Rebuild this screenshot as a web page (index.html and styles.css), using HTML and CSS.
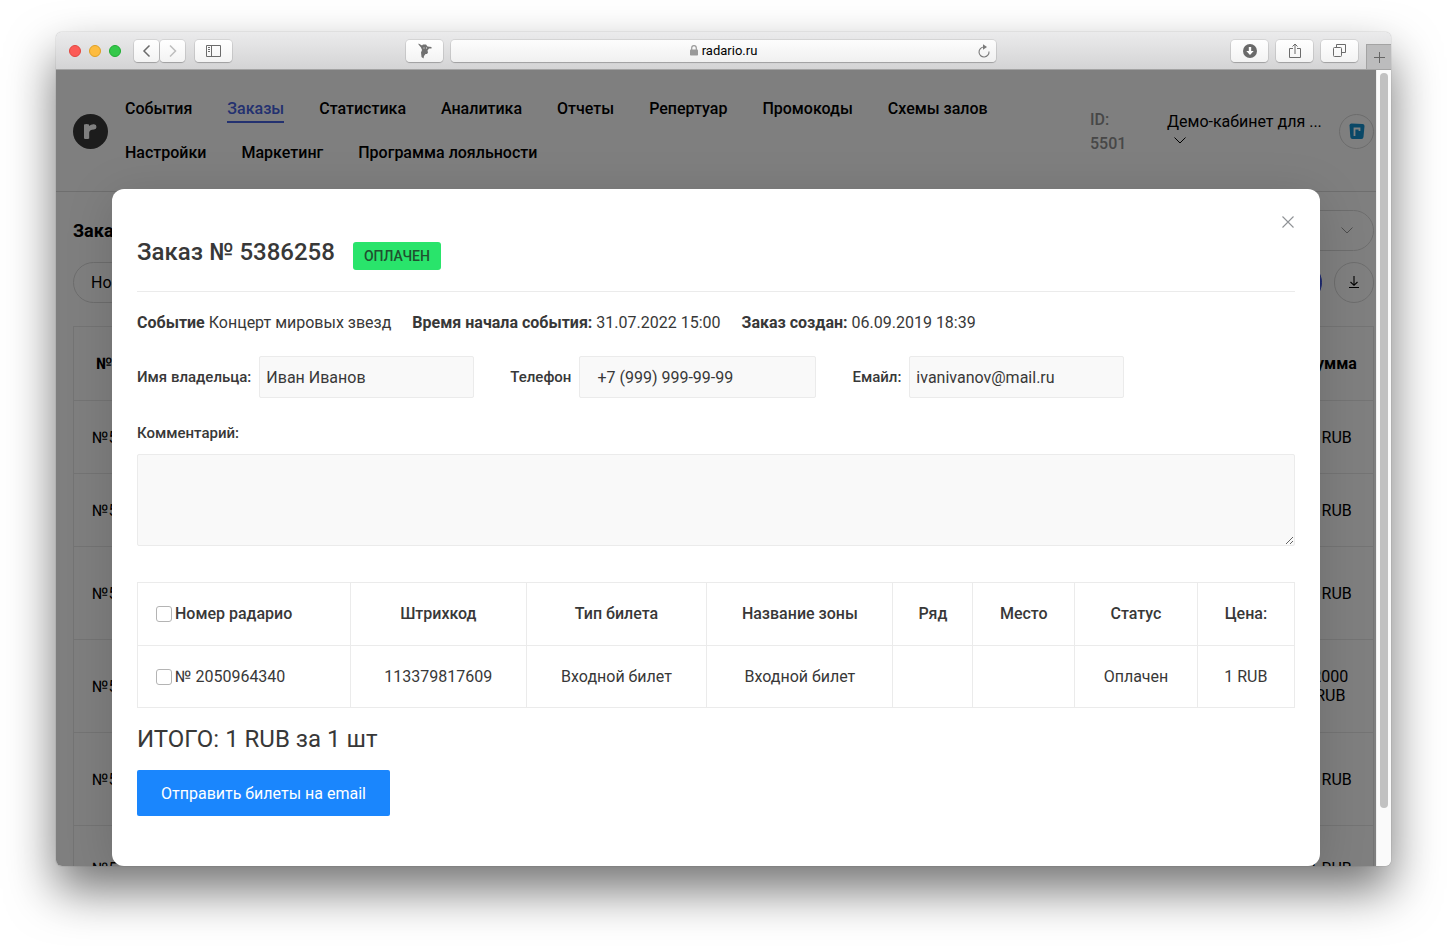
FILE: index.html
```html
<!DOCTYPE html>
<html lang="ru">
<head>
<meta charset="utf-8">
<title>radario.ru</title>
<link rel="stylesheet" href="styles.css">
</head>
<body>
<div class="window">
  <div class="toolbar">
    <div class="toolbar-left">
      <span class="light red"></span><span class="light yellow"></span><span class="light green"></span>
      <div class="history">
        <button class="tool narrow" type="button" aria-label="Назад"><svg width="10" height="14" viewBox="0 0 10 14"><path d="M7.500 1.500 2 7l5.500 5.500" fill="none" stroke="#6b6b6b" stroke-width="1.500"/></svg></button>
        <button class="tool narrow" type="button" aria-label="Вперёд"><svg width="10" height="14" viewBox="0 0 10 14"><path d="M2 1.500 7.500 7 2 12.500" fill="none" stroke="#bdbdbd" stroke-width="1.500"/></svg></button>
      </div>
      <button class="tool" type="button" aria-label="Боковая панель"><svg width="15" height="12" viewBox="0 0 15 12"><path d="M.5.5h14v11H.5zM5.500.5v11" fill="none" stroke="#6b6b6b"/><path d="M2 2.500h2M2 4.500h2M2 6.500h2" stroke="#6b6b6b"/></svg></button>
    </div>
    <div class="toolbar-center">
      <button class="tool" type="button" aria-label="Расширение"><svg width="14" height="16" viewBox="0 0 14 16"><path d="M.5.5 4 2.500 5 1.500h3l1.500 2L13.500 4v1.500H11L9.500 7.500l.5 2-1 1.500H7.500L6 13l-.5 2.500L3.500 14 3 9.500 4 7 3 4.500.5 1.500z" fill="#707070"/><path d="M5.500 5h1M8 5h1" stroke="#eee"/></svg></button>
      <div class="address">
        <span class="host"><svg width="8" height="11" viewBox="0 0 8 11"><path d="M1.700 5V3a2.300 2.300 0 0 1 4.600 0v2" fill="none" stroke="#999" stroke-width="1.200"/><rect y="4.500" width="8" height="6" rx=".8" fill="#999"/></svg>radario.ru</span>
        <button class="reload" type="button" aria-label="Обновить"><svg width="12" height="14" viewBox="0 0 12 14"><path d="M6 3a5 5 0 1 0 5 4.500" fill="none" stroke="#7a7a7a" stroke-width="1.100"/><path d="M5 .3 9 3 5 5.700z" fill="#7a7a7a"/></svg></button>
      </div>
    </div>
    <div class="toolbar-right">
      <button class="tool" type="button" aria-label="Загрузки"><svg width="14" height="14" viewBox="0 0 14 14"><circle cx="7" cy="7" r="7" fill="#6a6a6a"/><path d="M5.800 3h2.400v4h2.500L7 11 3.300 7h2.500z" fill="#fff"/></svg></button>
      <button class="tool" type="button" aria-label="Поделиться"><svg width="12" height="16" viewBox="0 0 12 16"><path d="M4 5.500H.5v9h11v-9H8M6 11V1M3.500 3.500 6 1l2.500 2.500" fill="none" stroke="#6b6b6b"/></svg></button>
      <button class="tool" type="button" aria-label="Вкладки"><svg width="13" height="13" viewBox="0 0 13 13"><path d="M.5 4.500q0-1 1-1h6q1 0 1 1v7q0 1-1 1h-6q-1 0-1-1zM3.500 3.500v-3h9v8h-4" fill="none" stroke="#6b6b6b"/></svg></button>
      <button class="new-tab" type="button" aria-label="Новая вкладка"><svg width="11" height="11" viewBox="0 0 11 11"><path d="M5.500 0v11M0 5.500h11" stroke="#666"/></svg></button>
    </div>
  </div>
  <div class="frame">
    <div class="viewport">
      <header class="site-header">
        <svg class="logo" width="35" height="35" viewBox="0 0 35 35"><circle cx="17.500" cy="17.500" r="17.500" fill="#383838"/><path d="M11 10.500q2.500-1 5 0v1.500q2-2 5-1.800 2.500.3 2.500 2.800 0 2.300-2.500 2.500-4.500 0-4.800 3v6q-2.500 1-5.200 0z" fill="#fff"/></svg>
        <nav class="menu">
          <a href="#">События</a><a href="#" class="active">Заказы</a><a href="#">Статистика</a><a href="#">Аналитика</a><a href="#">Отчеты</a><a href="#">Репертуар</a><a href="#">Промокоды</a><a href="#">Схемы залов</a><a href="#">Настройки</a><a href="#">Маркетинг</a><a href="#">Программа лояльности</a>
        </nav>
        <div class="account-id">ID: 5501</div>
        <button class="account" type="button"><span>Демо-кабинет для ...</span><svg width="12" height="7" viewBox="0 0 12 7"><path d="M.5.5 6 6 11.500.5" fill="none" stroke="#000"/></svg></button>
        <div class="avatar"><svg width="16" height="17" viewBox="0 0 16 17"><path d="M2.500.5 13.500 1q2 .2 2 2l-1 11q-.3 2-2 2H3.500q-2 0-2.200-2L.5 2.500q0-2 2-2z" fill="#1590cf"/><path d="M5.500 4.500v8.500M5.500 7V5.500h5V8" fill="none" stroke="#fff" stroke-width="1.800"/></svg></div>
      </header>
      <main class="orders">
        <div class="orders-head">
          <h1>Заказы</h1>
          <button class="pill period" type="button" aria-label="Период"><svg width="12" height="7" viewBox="0 0 12 7"><path d="M.5.5 6 6 11.500.5" fill="none" stroke="#999"/></svg></button>
        </div>
        <div class="filters">
          <button class="pill number" type="button">Номер</button>
          <button class="pill find" type="button" aria-label="Найти"></button>
          <button class="pill export" type="button" aria-label="Скачать"><svg width="10" height="13" viewBox="0 0 10 13"><path d="M5 0v9M1.500 6 5 9.300 8.500 6M0 11.500h10" fill="none" stroke="#000" stroke-width="1.100"/></svg></button>
        </div>
        <table class="orders-table">
          <thead><tr><th>№</th><th></th><th>Сумма</th></tr></thead>
          <tbody>
            <tr><td>№5</td><td></td><td>1 RUB</td></tr>
            <tr><td>№5</td><td></td><td>1 RUB</td></tr>
            <tr class="tall"><td>№5</td><td></td><td>1 RUB</td></tr>
            <tr class="tall"><td>№5</td><td></td><td>2000 RUB</td></tr>
            <tr class="tall"><td>№5</td><td></td><td>1 RUB</td></tr>
            <tr class="medium"><td>№5</td><td></td><td>1 RUB</td></tr>
          </tbody>
        </table>
      </main>
      <div class="overlay">
        <section class="modal" role="dialog" aria-labelledby="order-title">
          <button class="close" type="button" aria-label="Закрыть"><svg width="12" height="12" viewBox="0 0 12 12"><path d="M.5.5l11 11M11.500.5l-11 11" stroke="#8f9296" stroke-width="1.100"/></svg></button>
          <div class="modal-head">
            <h2 id="order-title">Заказ № 5386258</h2>
            <span class="badge">ОПЛАЧЕН</span>
          </div>
          <div class="facts">
            <span><b>Событие</b> Концерт мировых звезд</span>
            <span><b>Время начала события:</b> 31.07.2022 15:00</span>
            <span><b>Заказ создан:</b> 06.09.2019 18:39</span>
          </div>
          <div class="fields">
            <div class="field"><label for="owner">Имя владельца:</label><input id="owner" type="text" value="Иван Иванов"></div>
            <div class="field"><label for="phone">Телефон</label><input id="phone" class="phone" type="tel" value="+7 (999) 999-99-99"></div>
            <div class="field"><label for="email">Емайл:</label><input id="email" type="email" value="ivanivanov@mail.ru"></div>
          </div>
          <div class="comment">
            <label for="comment">Комментарий:</label>
            <textarea id="comment"></textarea>
          </div>
          <table class="tickets">
            <colgroup><col class="c-num"><col class="c-code"><col class="c-type"><col class="c-zone"><col class="c-row"><col class="c-seat"><col class="c-status"><col class="c-price"></colgroup>
            <thead>
              <tr><th><label><input type="checkbox">Номер радарио</label></th><th>Штрихкод</th><th>Тип билета</th><th>Название зоны</th><th>Ряд</th><th>Место</th><th>Статус</th><th>Цена:</th></tr>
            </thead>
            <tbody>
              <tr><td><label><input type="checkbox">№ 2050964340</label></td><td>113379817609</td><td>Входной билет</td><td>Входной билет</td><td></td><td></td><td>Оплачен</td><td>1 RUB</td></tr>
            </tbody>
          </table>
          <p class="total">ИТОГО: 1 RUB за 1 шт</p>
          <button class="send" type="button">Отправить билеты на email</button>
        </section>
      </div>
    </div>
    <div class="scrollbar"><div class="thumb"></div></div>
  </div>
</div>
</body>
</html>
```
FILE: styles.css
```css
* { box-sizing: border-box; }

body {
  margin: 0;
  padding: 32px 56px 80px;
  background: #fff;
  color: #000;
  font: 16px/24px Roboto, sans-serif;
  overflow: hidden;
}

button, input, textarea { font: inherit; color: inherit; }
button { padding: 0; border: 0; background: none; }
svg { display: block; flex: none; }

.window {
  display: flex;
  flex-direction: column;
  height: calc(100vh - 112px);
  border-radius: 6px;
  overflow: hidden;
  box-shadow: 0 0 1px rgba(0, 0, 0, .5), 0 24px 48px rgba(0, 0, 0, .55);
}

/* Browser toolbar */
.toolbar {
  display: grid;
  grid-template-columns: 350px minmax(0, 1fr) 395px;
  flex: none;
  height: 38px;
  border-bottom: 1px solid #a3a3a3;
  background: linear-gradient(#ebebec, #d4d4d5);
}
.toolbar-left, .toolbar-center, .toolbar-right { display: flex; align-items: center; }
.toolbar-left { gap: 8px; padding-left: 13px; }
.light { width: 12px; height: 12px; border-radius: 50%; }
.red { background: #fc5b57; border: 1px solid #e2463f; }
.yellow { background: #fdbc40; border: 1px solid #dfa023; }
.green { background: #34c84a; border: 1px solid #1fad33; }
.history { display: flex; gap: 1px; margin: 0 2px 0 5px; }
.tool {
  display: flex;
  align-items: center;
  justify-content: center;
  width: 37px;
  height: 22px;
  border-radius: 4px;
  background: linear-gradient(#fff, #f3f3f3);
  box-shadow: 0 0 0 1px rgba(0, 0, 0, .08), 0 1px 1px rgba(0, 0, 0, .2);
}
.narrow { width: 25px; }
.toolbar-center { gap: 8px; }
.address {
  display: flex;
  align-items: center;
  flex: 1;
  height: 22px;
  padding: 0 6px 0 18px;
  border-radius: 4px;
  background: linear-gradient(#fdfdfd, #f0f0f0);
  box-shadow: 0 0 0 1px rgba(0, 0, 0, .08), 0 1px 1px rgba(0, 0, 0, .2);
}
.host {
  display: flex;
  align-items: center;
  justify-content: center;
  gap: 4px;
  flex: 1;
  font-size: 13px;
}
.toolbar-right { justify-content: flex-end; gap: 8px; }
.new-tab {
  display: flex;
  align-items: center;
  justify-content: center;
  align-self: flex-end;
  width: 25px;
  height: 25px;
  border: 1px solid #a3a3a3;
  border-width: 1px 0 0 1px;
  background: #bcbcbd;
}

/* Page area */
.frame { display: flex; flex: 1; min-height: 0; }
.viewport { position: relative; flex: 1; min-width: 0; overflow: hidden; background: #fff; }
.scrollbar { width: 15px; padding: 3px; border-left: 1px solid #ededed; background: #fafafa; }
.thumb { width: 8px; height: 93%; border-radius: 4px; background: #c1c1c1; }

.site-header {
  display: flex;
  align-items: center;
  padding: 26px 2px 24px 17px;
  border-bottom: 1px solid #dcdcdc;
}
.menu {
  display: flex;
  flex-wrap: wrap;
  flex: 1;
  gap: 18px 35px;
  margin: 0 44px 0 17px;
  padding-top: 1px;
  font-weight: 500;
}
.menu a {
  border-bottom: 2px solid transparent;
  color: #000;
  text-decoration: none;
}
.menu .active { border-color: #4763e0; color: #4763e0; }
.account-id { width: 37px; margin-right: 40px; color: #8f8f8f; font-weight: 500; }
.account { width: 153px; margin-right: 19px; padding-bottom: 10px; text-align: left; white-space: nowrap; }
.account svg { margin: 3px 0 0 7px; }
.avatar {
  display: flex;
  align-items: center;
  justify-content: center;
  width: 35px;
  height: 35px;
  border: 1px solid #d8d8d8;
  border-radius: 50%;
}

.orders { padding: 18px 2px 0 17px; }
.orders-head, .filters { display: flex; align-items: center; justify-content: space-between; }
.orders-head { margin-bottom: 11px; }
.orders h1 { margin: 0; font-size: 18px; font-weight: 700; }
.pill { height: 41px; border: 1px solid #dadada; border-radius: 21px; }
.period { display: flex; align-items: center; justify-content: flex-end; width: 240px; padding-right: 20px; }
.filters { gap: 12px; }
.number { width: 240px; padding-left: 17px; text-align: left; }
.find { width: 120px; margin-left: auto; border-color: #3d52e0; background: #3d52e0; }
.export { display: flex; align-items: center; justify-content: center; width: 40px; }

.orders-table { width: 100%; margin-top: 23px; border-collapse: collapse; table-layout: fixed; line-height: 19px; }
.orders-table th, .orders-table td { height: 73px; padding: 0 18px; border: 1px solid #e9e9e9; border-width: 1px 0; }
.orders-table .tall td { height: 93px; }
.orders-table .medium td { height: 86px; }
.orders-table th { height: 74px; font-weight: 700; }
.orders-table th:first-child, .orders-table td:first-child { width: 96px; border-left-width: 1px; text-align: left; }
.orders-table th:first-child { padding-left: 22px; }
.orders-table th:last-child, .orders-table td:last-child { width: 86px; border-right-width: 1px; text-align: center; }

/* Order dialog */
.overlay { position: absolute; inset: 0; padding: 119px 56px 0; background: rgba(0, 0, 0, .5); }
.modal {
  position: relative;
  min-height: 100%;
  padding: 48px 25px 50px;
  border-radius: 12px;
  background: #fff;
  box-shadow: 0 8px 48px rgba(0, 0, 0, .15);
  color: #383838;
}
.close { position: absolute; top: 27px; right: 26px; }
.modal-head {
  display: flex;
  align-items: flex-start;
  gap: 18px;
  padding-bottom: 21px;
  border-bottom: 1px solid #ebebeb;
}
.modal h2 { margin: 0; font-size: 24px; line-height: 30px; font-weight: 500; }
.badge {
  margin-top: 5px;
  padding: 0 11px;
  border-radius: 3px;
  background: #29e46b;
  color: #20502f;
  font-size: 14px;
  line-height: 28px;
  font-weight: 500;
}
.facts { display: flex; flex-wrap: wrap; gap: 0 21px; margin-top: 19px; }
.facts b { font-weight: 700; }
.fields { display: flex; flex-wrap: wrap; gap: 12px 36px; margin-top: 21px; }
.field { display: flex; align-items: center; gap: 8px; }
.field label, .comment label { font-size: 15px; font-weight: 500; }
.field input {
  width: 215px;
  height: 42px;
  padding: 0 6px;
  border: 1px solid #ebebeb;
  border-radius: 2px;
  background: #f9f9f9;
}
.field .phone { width: 237px; padding: 0 17px; }
.comment { display: flex; flex-direction: column; gap: 9px; margin-top: 23px; }
.comment textarea {
  width: 100%;
  height: 92px;
  border: 1px solid #ebebeb;
  border-radius: 2px;
  background: #f9f9f9;
  resize: vertical;
}
.tickets { width: 100%; margin-top: 36px; border-collapse: collapse; table-layout: fixed; text-align: center; }
.tickets th, .tickets td { height: 62px; padding: 0; border: 1px solid #ebebeb; }
.tickets th { height: 63px; font-weight: 500; }
.tickets th:first-child, .tickets td:first-child { padding-left: 18px; text-align: left; }
.tickets label { display: flex; align-items: center; gap: 3px; }
.tickets input {
  width: 16px;
  height: 16px;
  margin: 0;
  appearance: none;
  border: 1px solid #b4b4b4;
  border-radius: 3px;
  background: #fff;
}
.c-num { width: 18.4%; }
.c-code { width: 15.2%; }
.c-type { width: 15.6%; }
.c-zone { width: 16.1%; }
.c-row { width: 6.9%; }
.c-seat { width: 8.8%; }
.c-status { width: 10.6%; }
.c-price { width: 8.4%; }
.total { margin: 16px 0; font-size: 24px; line-height: 30px; }
.send { height: 46px; padding: 1px 24px 0; border-radius: 2px; background: #1a86fd; color: #fff; }
```
